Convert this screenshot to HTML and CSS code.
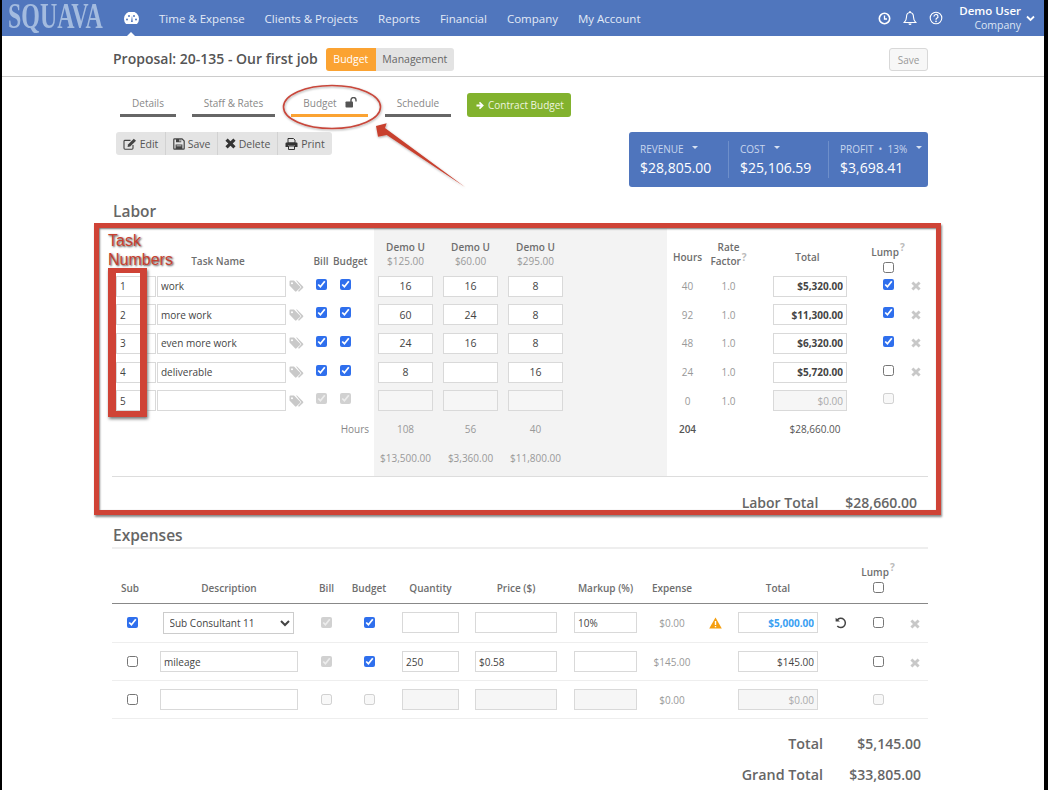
FILE: index.html
```html
<!DOCTYPE html>
<html lang="en">
<head>
<meta charset="utf-8">
<title>Squava - Budget</title>
<link rel="stylesheet" href="styles.css">
</head>
<body>
<svg class="defs" width="0" height="0" aria-hidden="true">
  <symbol id="i-x" viewBox="0 0 10 10"><path d="M2.4 0.4 5 3 7.6 0.4 9.6 2.4 7 5 9.6 7.6 7.6 9.6 5 7 2.4 9.6 0.4 7.6 3 5 0.4 2.4z" fill="currentColor"/></symbol>
  <symbol id="i-tags" viewBox="0 0 15 12"><path d="M0.5 1.5 A1 1 0 0 1 1.5 0.5 H5 L11 6.5 A1 1 0 0 1 11 8 L7.5 11.3 A1 1 0 0 1 6 11.3 L0.5 5.5z M3 2.2 A1 1 0 1 0 3 4.2 A1 1 0 1 0 3 2.2z" fill="currentColor" fill-rule="evenodd"/><path d="M7 0.5 H8 L14 6.5 A1 1 0 0 1 14 8 L10 11.8 L9 11 L12.3 7.3 Z" fill="currentColor"/></symbol>
</svg>
<div class="page">
  <header class="topbar">
    <div class="logo"><span class="logo-text">SQUAVA</span></div>
    <a class="gauge">
      <svg width="15" height="12" viewBox="0 0 15 12"><path d="M2 12 A7.5 7.5 0 1 1 13 12z" fill="#fff"/><circle cx="3" cy="7.5" r="1" fill="#5076bd"/><circle cx="5" cy="4" r="1" fill="#5076bd"/><circle cx="10" cy="4" r="1" fill="#5076bd"/><circle cx="12" cy="7.5" r="1" fill="#5076bd"/><path d="M7 10 L8 3.5 L8.8 10z" fill="#5076bd"/></svg>
    </a>
    <nav class="nav">
      <a>Time &amp; Expense</a>
      <a>Clients &amp; Projects</a>
      <a>Reports</a>
      <a>Financial</a>
      <a>Company</a>
      <a>My Account</a>
    </nav>
    <div class="top-icons">
      <svg width="13" height="13" viewBox="0 0 13 13"><circle cx="6.5" cy="6.5" r="5.2" fill="none" stroke="#fff" stroke-width="1.6"/><path d="M6.5 3.5V7H9" fill="none" stroke="#fff" stroke-width="1.3"/></svg>
      <svg width="14" height="15" viewBox="0 0 14 15"><path d="M7 1.5C4.5 1.5 3.5 3.5 3.5 6C3.5 8.8 2.7 10 1.2 11.5H12.8C11.3 10 10.5 8.8 10.5 6C10.5 3.5 9.5 1.5 7 1.5z" fill="none" stroke="#fff" stroke-width="1.1"/><path d="M5.5 12.5A1.5 1.5 0 0 0 8.5 12.5z" fill="#fff"/><circle cx="7" cy="1" r="0.9" fill="#fff"/></svg>
      <svg width="14" height="14" viewBox="0 0 14 14"><circle cx="7" cy="7" r="5.8" fill="none" stroke="#fff" stroke-width="1.1"/><path d="M5 5.6A2 2 0 1 1 7.8 7.3C7.2 7.7 7 8 7 8.8" fill="none" stroke="#fff" stroke-width="1.2"/><circle cx="7" cy="10.4" r="0.8" fill="#fff"/></svg>
    </div>
    <div class="user">
      <div class="user-name">Demo User</div>
      <div class="user-co">Company</div>
    </div>
    <svg class="user-chev" width="9" height="7" viewBox="0 0 9 7"><path d="M1 1.5 4.5 5 8 1.5" fill="none" stroke="#fff" stroke-width="1.8"/></svg>
  </header>

  <div class="subbar">
    <h1 class="title">Proposal: 20-135 - Our first job</h1>
    <div class="switch"><span class="switch-on">Budget</span><span class="switch-off">Management</span></div>
    <button class="save-btn">Save</button>
  </div>

  <main class="content">
    <div class="tabs">
      <a class="tab tab-details">Details</a>
      <a class="tab tab-staff">Staff &amp; Rates</a>
      <a class="tab tab-budget">Budget
        <svg class="lock" width="13" height="11" viewBox="0 0 13 11"><rect x="0.5" y="4.5" width="7.5" height="6" rx="0.8" fill="#555"/><path d="M6 5V3A2.4 2.4 0 0 1 11 3V4.6" fill="none" stroke="#555" stroke-width="1.4"/></svg>
      </a>
      <a class="tab tab-schedule">Schedule</a>
      <button class="contract">
        <svg width="9" height="9" viewBox="0 0 9 9"><path d="M0.5 3.6H4.6L2.9 1.9 4 0.8 7.9 4.5 4 8.2 2.9 7.1 4.6 5.4H0.5z" fill="#fff"/></svg>
        Contract Budget
      </button>
    </div>

    <div class="tools-row">
      <div class="toolbar">
        <button class="tool tool-edit"><svg width="14" height="12" viewBox="0 0 14 12"><path d="M10 7V10.3A1 1 0 0 1 9 11.2H2A1 1 0 0 1 1 10.3V3.3A1 1 0 0 1 2 2.4H7.5" fill="none" stroke="#444" stroke-width="1.1"/><path d="M5 6.5 10.8 0.8 13 2.8 7.2 8.6 4.6 9z" fill="#444"/></svg>Edit</button>
        <button class="tool tool-save"><svg width="12" height="12" viewBox="0 0 12 12"><path d="M0.8 1.5A.7.7 0 0 1 1.5.8H9L11.2 3V10.5A.7.7 0 0 1 10.5 11.2H1.5A.7.7 0 0 1 .8 10.5z" fill="none" stroke="#444" stroke-width="1.2"/><path d="M3 1H8.2V4.2H3zM2.6 6.6H9.4V11H2.6z" fill="#444"/><path d="M6.4 1.6H7.6V3.6H6.4zM3.6 7.6H8.4V8.3H3.6z" fill="#e8e8e8"/></svg>Save</button>
        <button class="tool tool-delete"><svg width="11" height="11" viewBox="0 0 10 10"><use href="#i-x"/></svg>Delete</button>
        <button class="tool tool-print"><svg width="13" height="12" viewBox="0 0 13 12"><path d="M3 .5H8.4L10 2V5H3z" fill="none" stroke="#333" stroke-width="1"/><path d="M1.5 4.6H11.5A1 1 0 0 1 12.5 5.6V9H10V7.5H3V9H.5V5.6A1 1 0 0 1 1.5 4.6z" fill="#333"/><path d="M3.5 8H9.5V11.5H3.5z" fill="none" stroke="#333" stroke-width="1"/></svg>Print</button>
      </div>
      <div class="summary">
        <div class="sum-cell"><div class="sum-label">REVENUE <i class="caret"></i></div><div class="sum-value">$28,805.00</div></div>
        <div class="sum-cell"><div class="sum-label">COST <i class="caret"></i></div><div class="sum-value">$25,106.59</div></div>
        <div class="sum-cell"><div class="sum-label">PROFIT &nbsp;•&nbsp; 13% <i class="caret"></i></div><div class="sum-value">$3,698.41</div></div>
      </div>
    </div>

    <h2 class="section labor-title">Labor</h2>
    <section class="labor">
      <div class="lab-left">
        <div></div><div class="th th-name">Task Name</div><div></div><div class="th">Bill</div><div class="th">Budget</div>

        <div class="cell-num"><input class="in in-num" value="1"></div><div><input class="in in-name" value="work"></div><svg class="tag"><use href="#i-tags"/></svg><div class="ck"><input type="checkbox" checked></div><div class="ck"><input type="checkbox" checked></div>
        <div class="cell-num"><input class="in in-num" value="2"></div><div><input class="in in-name" value="more work"></div><svg class="tag"><use href="#i-tags"/></svg><div class="ck"><input type="checkbox" checked></div><div class="ck"><input type="checkbox" checked></div>
        <div class="cell-num"><input class="in in-num" value="3"></div><div><input class="in in-name" value="even more work"></div><svg class="tag"><use href="#i-tags"/></svg><div class="ck"><input type="checkbox" checked></div><div class="ck"><input type="checkbox" checked></div>
        <div class="cell-num"><input class="in in-num" value="4"></div><div><input class="in in-name" value="deliverable"></div><svg class="tag"><use href="#i-tags"/></svg><div class="ck"><input type="checkbox" checked></div><div class="ck"><input type="checkbox" checked></div>
        <div class="cell-num"><input class="in in-num" value="5"></div><div><input class="in in-name"></div><svg class="tag"><use href="#i-tags"/></svg><div class="ck"><input type="checkbox" checked disabled></div><div class="ck"><input type="checkbox" checked disabled></div>

        <div class="hours-label">Hours</div>
      </div>

      <div class="lab-mid">
        <div class="staff"><b>Demo U</b><span>$125.00</span></div><div class="staff"><b>Demo U</b><span>$60.00</span></div><div class="staff"><b>Demo U</b><span>$295.00</span></div>
        <input class="in in-c" value="16"><input class="in in-c" value="16"><input class="in in-c" value="8">
        <input class="in in-c" value="60"><input class="in in-c" value="24"><input class="in in-c" value="8">
        <input class="in in-c" value="24"><input class="in in-c" value="16"><input class="in in-c" value="8">
        <input class="in in-c" value="8"><input class="in in-c"><input class="in in-c" value="16">
        <input class="in in-c in-dis"><input class="in in-c in-dis"><input class="in in-c in-dis">
        <div class="num">108</div><div class="num">56</div><div class="num">40</div>
        <div class="num">$13,500.00</div><div class="num">$3,360.00</div><div class="num">$11,800.00</div>
      </div>

      <div class="lab-right">
        <div class="th">Hours</div><div class="th th-rate">Rate<br>Factor<sup class="help">?</sup></div><div></div><div class="th th-total">Total</div><div></div><div class="th th-lump"><span>Lump<sup class="help">?</sup></span><input type="checkbox"></div><div></div>

        <div class="num">40</div><div class="num">1.0</div><div></div><input class="in in-total" value="$5,320.00"><div></div><div class="ck"><input type="checkbox" checked></div><svg class="del"><use href="#i-x"/></svg>
        <div class="num">92</div><div class="num">1.0</div><div></div><input class="in in-total" value="$11,300.00"><div></div><div class="ck"><input type="checkbox" checked></div><svg class="del"><use href="#i-x"/></svg>
        <div class="num">48</div><div class="num">1.0</div><div></div><input class="in in-total" value="$6,320.00"><div></div><div class="ck"><input type="checkbox" checked></div><svg class="del"><use href="#i-x"/></svg>
        <div class="num">24</div><div class="num">1.0</div><div></div><input class="in in-total" value="$5,720.00"><div></div><div class="ck"><input type="checkbox"></div><svg class="del"><use href="#i-x"/></svg>
        <div class="num">0</div><div class="num">1.0</div><div></div><input class="in in-total in-dis" value="$0.00"><div></div><div class="ck"><input type="checkbox" disabled></div><div></div>

        <div class="num num-strong">204</div><div></div><div></div><div class="num num-total">$28,660.00</div>
      </div>
    </section>
    <div class="labor-total"><span class="lt-label">Labor Total</span><span class="lt-value">$28,660.00</span></div>

    <h2 class="section exp-title">Expenses</h2>
    <div class="exp-head exp-grid">
      <div class="th th-sub">Sub</div><div class="th">Description</div><div class="th">Bill</div><div class="th">Budget</div><div class="th">Quantity</div><div class="th">Price ($)</div><div class="th">Markup (%)</div><div class="th">Expense</div><div></div><div class="th">Total</div><div></div><div class="th th-lump th-lump2"><span>Lump<sup class="help">?</sup></span><input type="checkbox"></div><div></div>
    </div>
    <div class="exp-row exp-row-first exp-grid">
      <div class="ck"><input type="checkbox" checked></div>
      <div class="cc"><select class="sel"><option>Sub Consultant 11</option></select></div>
      <div class="ck"><input type="checkbox" checked disabled></div>
      <div class="ck"><input type="checkbox" checked></div>
      <div class="cc"><input class="in in-qty"></div>
      <div class="cc"><input class="in in-price"></div>
      <div class="cc"><input class="in in-markup" value="10%"></div>
      <div class="num">$0.00</div>
      <div class="cc"><svg width="13" height="12" viewBox="0 0 13 12"><path d="M6.5 .5 12.8 11.6H.2z" fill="#f59f0f"/><path d="M5.8 4H7.2V8H5.8zM5.8 9H7.2V10.3H5.8z" fill="#fff"/></svg></div>
      <div class="cc"><input class="in in-exptotal in-blue" value="$5,000.00"></div>
      <div class="cc"><svg width="12" height="12" viewBox="0 0 12 12"><path d="M2.2 3A4.6 4.6 0 1 1 2.3 9" fill="none" stroke="#444" stroke-width="1.5"/><path d="M.6 .8 5 4.6H.6z" fill="#444"/></svg></div>
      <div class="ck"><input type="checkbox"></div>
      <svg class="del del-exp"><use href="#i-x"/></svg>
    </div>
    <div class="exp-row exp-grid">
      <div class="ck"><input type="checkbox"></div>
      <div class="cc"><input class="in in-desc" value="mileage"></div>
      <div class="ck"><input type="checkbox" checked disabled></div>
      <div class="ck"><input type="checkbox" checked></div>
      <div class="cc"><input class="in in-qty" value="250"></div>
      <div class="cc"><input class="in in-price" value="$0.58"></div>
      <div class="cc"><input class="in in-markup"></div>
      <div class="num">$145.00</div>
      <div></div>
      <div class="cc"><input class="in in-exptotal" value="$145.00"></div>
      <div></div>
      <div class="ck"><input type="checkbox"></div>
      <svg class="del del-exp"><use href="#i-x"/></svg>
    </div>
    <div class="exp-row exp-grid">
      <div class="ck"><input type="checkbox"></div>
      <div class="cc"><input class="in in-desc"></div>
      <div class="ck"><input type="checkbox" disabled></div>
      <div class="ck"><input type="checkbox" disabled></div>
      <div class="cc"><input class="in in-qty in-dis"></div>
      <div class="cc"><input class="in in-price in-dis"></div>
      <div class="cc"><input class="in in-markup in-dis"></div>
      <div class="num">$0.00</div>
      <div></div>
      <div class="cc"><input class="in in-exptotal in-dis" value="$0.00"></div>
      <div></div>
      <div class="ck"><input type="checkbox" disabled></div>
      <div></div>
    </div>
    <div class="grand grand-first"><span class="g-label">Total</span><span class="g-value">$5,145.00</span></div>
    <div class="grand"><span class="g-label">Grand Total</span><span class="g-value">$33,805.00</span></div>
  </main>

  <!-- Red annotations drawn over the screenshot -->
  <div class="mark-labor"></div>
  <div class="mark-tasks"></div>
  <div class="mark-text">Task<br>Numbers</div>
  <svg class="mark-svg" width="1042" height="200" viewBox="0 0 1042 200">
    <defs><filter id="soft" x="-10%" y="-10%" width="120%" height="120%"><feDropShadow dx="0.5" dy="1" stdDeviation="1" flood-color="#000" flood-opacity="0.35"/></filter></defs>
    <ellipse cx="332" cy="107" rx="48.5" ry="21.5" fill="none" stroke="#c8473b" stroke-width="1.6" filter="url(#soft)"/>
    <path d="M376 126 386.7 123.3 385 128 465 187 386.7 135 378 136.7z" fill="#c8412f" filter="url(#soft)"/>
  </svg>
</div>
</body>
</html>
```

FILE: styles.css
```css
* { box-sizing: border-box; }
html, body { margin: 0; height: 790px; overflow: hidden; background: #000; }
body { font-family: "Open Sans", "Liberation Sans", sans-serif; color: #555; }
.defs { position: absolute; }
.page { position: relative; width: 1042px; height: 790px; margin-left: 2px; background: #fff; overflow: hidden; }

/* top bar */
.topbar { display: flex; align-items: center; height: 36px; background: #5076bd; color: #fff; padding-left: 6px; }
.logo { width: 116px; height: 36px; flex: none; }
.logo-text { display: block; width: 100px; font: bold 23px/22px "Liberation Serif", serif; color: #a3bbdf; transform: scale(1.04, 1.55); transform-origin: 0 0; white-space: nowrap; }
.gauge { position: relative; display: flex; align-items: center; justify-content: center; width: 15px; height: 36px; flex: none; }
.gauge::after { content: ""; position: absolute; left: 3px; bottom: 0; border: 4px solid transparent; border-top: 0; border-bottom-color: #fff; }
.nav { display: flex; gap: 20px; margin-left: 20px; font-size: 11.5px; color: #e3eaf6; }
.top-icons { display: flex; align-items: center; gap: 12px; margin-left: auto; }
.user { margin-left: 16px; text-align: right; line-height: 14px; }
.user-name { font-size: 11.5px; font-weight: 600; }
.user-co { font-size: 10.5px; color: #dce5f4; }
.user-chev { margin: 0 9px 0 5px; }

/* title bar */
.subbar { display: flex; align-items: flex-start; height: 41px; padding: 12px 116px 0 111px; border-bottom: 1px solid #ccc; }
.title { margin: 0; font-size: 14px; line-height: 22px; font-weight: 600; color: #555; }
.switch { display: flex; margin-left: 8px; height: 23px; font-size: 10.5px; line-height: 23px; }
.switch-on { width: 50px; text-align: center; background: #fba332; color: #fff; border-radius: 3px 0 0 3px; }
.switch-off { width: 78px; text-align: center; background: #e3e3e3; color: #666; border-radius: 0 3px 3px 0; }
.save-btn { margin-left: auto; width: 39px; height: 23px; padding: 0; border: 1px solid #d8d8d8; border-radius: 3px; background: #f7f7f7; color: #999; font: 10px "Open Sans", sans-serif; }

/* content */
.content { width: 816px; margin-left: 110px; }
.tabs { display: flex; align-items: flex-start; margin: 16px 0 0 8px; font-size: 10px; color: #888; }
.tab { display: block; height: 24px; line-height: 21px; text-align: center; border-bottom: 3px solid #666; margin-right: 16px; }
.tab-details { width: 56px; }
.tab-staff { width: 83px; }
.tab-budget { width: 77px; border-bottom-color: #fba332; padding-right: 19px; margin-right: 17px; position: relative; }
.lock { position: absolute; right: 10px; top: 4px; }
.tab-schedule { width: 66px; }
.contract { display: flex; align-items: center; gap: 3px; width: 104px; height: 24px; padding: 0 0 0 9px; border: 0; border-radius: 3px; background: #82b22e; color: #eef5df; font: 10px "Open Sans", sans-serif; }

.tools-row { display: flex; align-items: flex-start; justify-content: space-between; margin-top: 15px; height: 55px; }
.toolbar { display: flex; margin-left: 4px; height: 23px; background: #e4e4e4; border-radius: 3px; }
.tool { display: flex; align-items: center; justify-content: center; gap: 3px; padding: 0; height: 23px; border: 0; border-right: 1px solid #d2d2d2; background: none; color: #555; font: 10.5px "Open Sans", sans-serif; }
.tool:last-child { border-right: 0; }
.tool-edit { width: 50px; }
.tool-save { width: 52px; }
.tool-delete { width: 60px; }
.tool-delete svg { color: #333; }
.tool-print { width: 54px; }
.summary { display: flex; width: 299px; height: 55px; padding: 9px 0; background: #4f75bd; border-radius: 3px; color: #fff; }
.sum-cell { width: 100px; padding-left: 11px; border-right: 1px solid #6e8fca; }
.sum-cell:last-child { border-right: 0; width: 99px; }
.sum-label { font-size: 10px; line-height: 16px; color: #c9d6ee; white-space: nowrap; position: relative; }
.sum-value { font-size: 14px; line-height: 21px; }
.caret { display: inline-block; vertical-align: 4px; margin-left: 6px; border: 3px solid transparent; border-bottom: 0; border-top-color: #d7e1f2; }

.section { margin: 0; padding-left: 1px; font-size: 15.5px; line-height: 20px; font-weight: 600; color: #666; }
.labor-title { margin-top: 14px; }

/* labor */
.labor { display: flex; margin-top: 7px; height: 249px; border-bottom: 1px solid #ddd; }
.lab-left { display: grid; flex: none; width: 262px; grid-template-columns: 45px 129px 23px 24px 24px; grid-template-rows: 44px; grid-auto-rows: 28.6px; align-items: center; }
.lab-mid { display: grid; flex: none; width: 293px; padding-left: 4px; background: #f3f3f3; grid-template-columns: 55px 55px 55px; column-gap: 10px; grid-template-rows: 44px; grid-auto-rows: 28.6px; align-items: center; }
.lab-right { display: grid; flex: none; width: 261px; grid-template-columns: 41px 41px 24px 74px 24px 34px 22px; grid-template-rows: 44px; grid-auto-rows: 28.6px; align-items: center; }
.th { font-size: 10px; font-weight: 600; color: #6e6e6e; text-align: center; white-space: nowrap; }
.lab-left .th { padding-top: 22px; }
.lab-right .th { padding-top: 14px; }
.th-rate { line-height: 14px; padding-top: 8px !important; position: relative; }
.th-name { padding-right: 7px; }
.th-total { padding-right: 5px; }
.th-sub { padding-right: 4px; }
.th-lump { display: flex; flex-direction: column; align-items: center; line-height: 13px; padding-top: 18px !important; }
.help { font-size: 10px; line-height: 0; color: #bbb; font-weight: 700; margin-left: 1px; }
.staff { text-align: center; padding-top: 7px; font-size: 10px; line-height: 14px; }
.staff b { display: block; font-weight: 600; color: #6e6e6e; }
.staff span { color: #999; }
.cell-num { padding-left: 4px; }
.in { display: block; height: 21px; padding: 0 3px; border: 1px solid #d9d9d9; background: #fff; color: #444; font: 10px "Open Sans", sans-serif; outline: 0; }
.in-num { width: 40px; }
.in-name { width: 129px; }
.in-c { width: 55px; text-align: center; font-size: 10.5px; }
.in-total { width: 74px; text-align: right; font-weight: 700; padding-right: 3px; }
.in-dis { background: #f6f6f6; color: #aaa; font-weight: 400; }
.tag { width: 15px; height: 12px; margin-left: 3px; color: #c9c9c9; }
.ck { display: flex; justify-content: center; }
.ck input, .th-lump input { width: 11px; height: 11px; margin: 0; accent-color: #2f6fed; }
.th-lump input { margin-top: 3px; }
.lab-left .ck, .lab-right .ck { padding-bottom: 4px; }
.hours-label { grid-column: 1 / -1; text-align: right; font-size: 10px; color: #888; padding-right: 5px; margin-right: -17px; }
.num { font-size: 10px; color: #999; text-align: center; white-space: nowrap; }
.num-strong { color: #555; font-weight: 600; }
.num-total { color: #555; padding-left: 10px; grid-column: 4; }
.del { width: 10px; height: 10px; color: #c8c8c8; justify-self: center; }

.labor-total { display: flex; justify-content: flex-end; height: 48px; padding: 16px 11px 0 0; font-size: 14px; line-height: 20px; font-weight: 600; color: #666; }
.lt-value { margin-left: 27px; }

/* expenses */
.exp-title { height: 24px; border-bottom: 2px solid #eee; }
.exp-grid { display: grid; grid-template-columns: 40px 154px 41px 44px 79px 92px 87px 46px 40px 86px 40px 34px 33px; align-items: center; }
.exp-head { height: 55px; border-bottom: 1px solid #888; padding-top: 23px; }
.th-lump2 { padding-top: 0 !important; margin-top: -17px; }
.exp-row { height: 38px; border-bottom: 1px solid #eee; }
.exp-row-first { height: 39px; padding-bottom: 1px; }
.cc { display: flex; justify-content: center; align-items: center; }
.sel { width: 131px; height: 22px; margin-left: -2px; padding-left: 2px; border: 1px solid #ccc; background: #fff; color: #444; font: 10px "Open Sans", sans-serif; }
.in-desc { width: 138px; }
.in-qty { width: 57px; }
.in-price { width: 82px; }
.in-markup { width: 63px; }
.in-exptotal { width: 80px; text-align: right; }
.in-blue { color: #3aa0f2; font-weight: 700; }
.del-exp { justify-self: end; margin: 3px 8px 0 0; }

.grand { display: flex; justify-content: flex-end; height: 31px; padding-right: 7px; font-size: 14.3px; line-height: 31px; font-weight: 600; color: #666; }
.grand-first { margin-top: 9px; }
.g-label { text-align: right; }
.g-value { width: 98px; text-align: right; font-size: 14px; }

/* annotations */
.mark-labor { position: absolute; left: 92px; top: 223px; width: 847px; height: 292px; border: 5.5px solid #cf4336; box-shadow: 1px 2px 2px #888, inset 1px 1px 2px #777; pointer-events: none; }
.mark-tasks { position: absolute; left: 106px; top: 268px; width: 39px; height: 149px; border: solid #cf4336; border-width: 5px 7px 6px 8px; box-shadow: 1px 2px 3px #777; }
.mark-text { position: absolute; left: 106px; top: 231px; font: 16px/19px "Liberation Sans", sans-serif; color: #c9402f; text-shadow: 1px 1px 2px #444; }
.mark-svg { position: absolute; left: -2px; top: 0; pointer-events: none; }
```
